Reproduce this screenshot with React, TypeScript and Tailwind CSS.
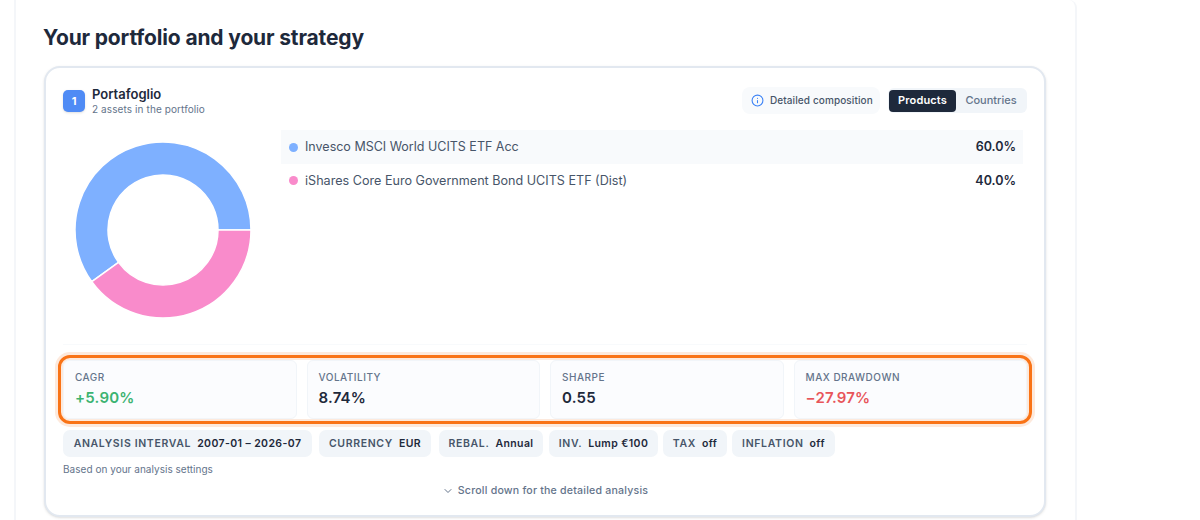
const INTER = "font-['Inter',sans-serif]";

const stats = [
  { label: "CAGR", value: "+5.90%", color: "text-[#3cb371]" },
  { label: "VOLATILITY", value: "8.74%", color: "text-[#1e293b]" },
  { label: "SHARPE", value: "0.55", color: "text-[#1e293b]" },
  { label: "MAX DRAWDOWN", value: "−27.97%", color: "text-[#e8555a]" },
];

const chips = [
  { k: "ANALYSIS INTERVAL", v: "2007-01 – 2026-07", box: "w-[249px]" },
  { k: "CURRENCY", v: "EUR", box: "w-[112px] ml-[7px]" },
  { k: "REBAL.", v: "Annual", box: "w-[104px] ml-[8px]" },
  { k: "INV.", v: "Lump €100", box: "w-[109px] ml-[6px]" },
  { k: "TAX", v: "off", box: "w-[64px] ml-[5px]" },
  { k: "INFLATION", v: "off", box: "w-[103px] ml-[5px]" },
];

function sector(a0: number, a1: number) {
  const cx = 100, cy = 100, R = 88, r = 55;
  const p = (rad: number, a: number) => {
    const t = (a * Math.PI) / 180;
    return `${(cx + rad * Math.cos(t)).toFixed(2)} ${(cy - rad * Math.sin(t)).toFixed(2)}`;
  };
  const large = Math.abs(a1 - a0) > 180 ? 1 : 0;
  return `M${p(R, a0)} A${R} ${R} 0 ${large} 0 ${p(R, a1)} L${p(r, a1)} A${r} ${r} 0 ${large} 1 ${p(r, a0)} Z`;
}

function Donut() {
  return (
    <svg width="200" height="200" viewBox="0 0 200 200" className="block">
      <path d={sector(0, 216)} fill="#7eb0ff" stroke="#ffffff" strokeWidth="1.5" strokeLinejoin="round" />
      <path d={sector(216, 360)} fill="#f98bcb" stroke="#ffffff" strokeWidth="1.5" strokeLinejoin="round" />
    </svg>
  );
}

export default function App() {
  return (
    <div className={`${INTER} w-[1200px] h-[520px] overflow-hidden bg-white pl-[14px]`}>
      <div className="w-[1063px] h-[520px] overflow-hidden bg-white border-x-2 border-[#f4f6f9] rounded-tr-[8px] pl-[28px] pr-[29px] pt-[23px]">
        <h2 className="-ml-[1px] text-[21px] leading-[30px] font-bold text-[#1e293b] tracking-[-0.15px]">
          Your portfolio and your strategy
        </h2>
        <div className="mt-[13px] h-[451px] rounded-[16px] border-2 border-[#e2e8f0] bg-white px-[17px] pt-[18px] shadow-sm">
          <div className="flex items-center justify-between h-[30px]">
            <div className="flex items-center gap-[7px]">
              <div className="w-[22px] h-[22px] rounded-[5px] bg-[#4f8bf5] text-white text-[11px] font-bold flex items-center justify-center shadow-sm">
                1
              </div>
              <div>
                <div className="text-[13px] leading-[16px] font-semibold text-[#1e293b]">Portafoglio</div>
                <div className="text-[10px] leading-[14px] text-[#64748b] tracking-[0.1px]">2 assets in the portfolio</div>
              </div>
            </div>
            <div className="flex items-center gap-[8px] -mt-[1px]">
              <div className="h-[27px] w-[138px] rounded-[8px] bg-[#f8fafc] flex items-center pl-[9px] gap-[6px]">
                <svg width="13" height="13" viewBox="0 0 24 24" fill="none" stroke="#3b82f6" strokeWidth="2" strokeLinecap="round">
                  <circle cx="12" cy="12" r="10" />
                  <path d="M12 16v-4M12 8h.01" />
                </svg>
                <span className="text-[10px] font-medium text-[#475569] tracking-[0.1px]">Detailed composition</span>
              </div>
              <div className="h-[25px] w-[139px] rounded-[6px] bg-[#f1f5f9] flex items-center p-[1px]">
                <div className="h-[22px] w-[67px] rounded-[4px] bg-[#1e293b] text-white text-[11px] font-semibold tracking-[0.15px] flex items-center justify-center">
                  Products
                </div>
                <div className="flex-1 text-center text-[11px] font-medium text-[#64748b]">Countries</div>
              </div>
            </div>
          </div>

          <div className="flex mt-[14px] h-[215px] border-b border-[#f8fafc]">
            <div className="w-[218px] shrink-0">
              <Donut />
            </div>
            <div className="flex-1 mr-[4px]">
              <div className="flex items-center h-[34px] bg-[#f8fafc] pl-[8px] pr-[7px] justify-between">
                <div className="flex items-center gap-[7px]">
                  <span className="w-[9px] h-[9px] rounded-full bg-[#7eb0ff]" />
                  <span className="text-[12.5px] text-[#475569]">Invesco MSCI World UCITS ETF Acc</span>
                </div>
                <span className="text-[12.5px] font-semibold text-[#1e293b]">60.0%</span>
              </div>
              <div className="flex items-center h-[34px] pl-[8px] pr-[7px] justify-between">
                <div className="flex items-center gap-[7px]">
                  <span className="w-[9px] h-[9px] rounded-full bg-[#f98bcb]" />
                  <span className="text-[12.6px] text-[#475569]">iShares Core Euro Government Bond UCITS ETF (Dist)</span>
                </div>
                <span className="text-[12.5px] font-semibold text-[#1e293b]">40.0%</span>
              </div>
            </div>
          </div>

          <div className="mt-[15px] grid grid-cols-4 gap-[10px] rounded-[7px] outline-[3px] outline-offset-[2px] outline-[#f97316] shadow-[0_0_0_8px_#fde9dc]">
            {stats.map((s) => (
              <div key={s.label} className="h-[59px] rounded-[6px] border border-[#f1f5f9] bg-[#fbfcfe] pl-[11px] pt-[9px]">
                <div className="text-[10px] leading-[14px] font-medium tracking-[0.5px] text-[#64748b]">{s.label}</div>
                <div className={`text-[15px] leading-[20px] mt-[4px] font-semibold tracking-[0.2px] ${s.color}`}>{s.value}</div>
              </div>
            ))}
          </div>

          <div className="mt-[11px] flex">
            {chips.map((c) => (
              <div key={c.k} className={`${c.box} h-[27px] rounded-[7px] bg-[#f1f5f9] flex items-center justify-center gap-[6px] text-[10.5px] font-semibold text-[#1e293b] whitespace-nowrap`}>
                <span className="text-[#475569] tracking-[0.65px]">{c.k}</span>
                <span className="tracking-[0.4px]">{c.v}</span>
              </div>
            ))}
          </div>

          <div className="mt-[5px] text-[10px] leading-[14px] tracking-[0.03px] text-[#64748b]">Based on your analysis settings</div>

          <div className="mt-[8px] flex items-center justify-center gap-[4px] text-[10.6px] leading-[14px] tracking-[0.2px] font-medium text-[#64748b]">
            <svg width="12" height="12" viewBox="0 0 24 24" fill="none" stroke="#64748b" strokeWidth="2" strokeLinecap="round" strokeLinejoin="round">
              <path d="m6 9 6 6 6-6" />
            </svg>
            <span>Scroll down for the detailed analysis</span>
          </div>
        </div>
      </div>
    </div>
  );
}
